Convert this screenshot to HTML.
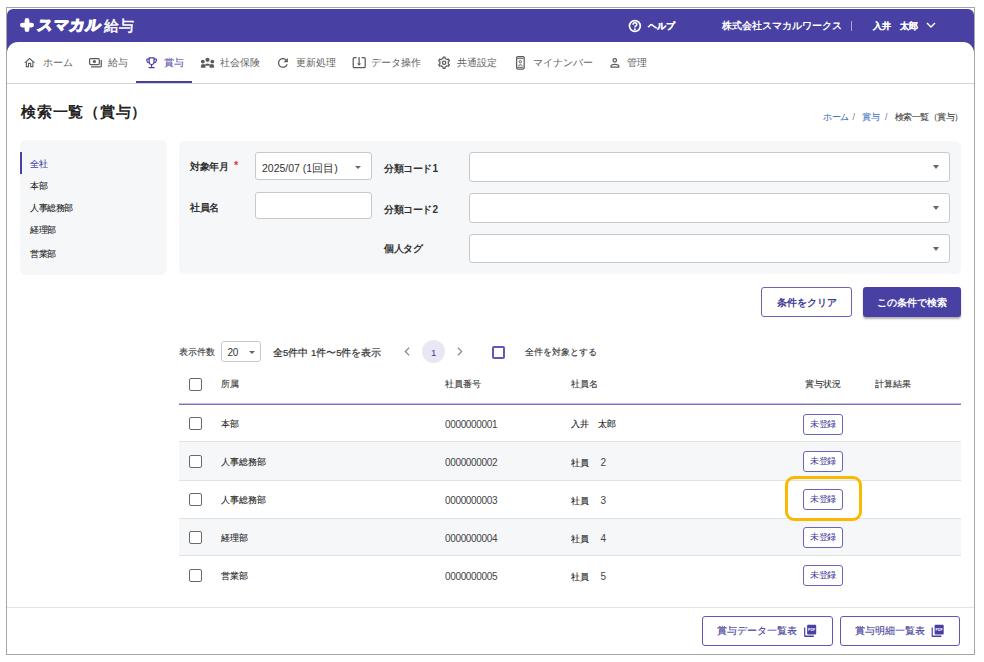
<!DOCTYPE html>
<html lang="ja">
<head>
<meta charset="utf-8">
<style>
*{box-sizing:border-box;margin:0;padding:0}
html,body{width:984px;height:662px;background:#fff;overflow:hidden;font-family:"Liberation Sans",sans-serif;color:#222}
#frame{position:absolute;left:6px;top:7px;width:969px;height:648px;border:1px solid #a6a6a6}
#hdr{position:absolute;left:7px;top:9px;width:967px;height:50px;background:#4841a3;border-radius:6px 6px 0 0}
#main{position:absolute;left:7px;top:42px;width:967px;height:612px;background:#fff;border-radius:11px 11px 0 0}
.t{position:absolute;white-space:nowrap;line-height:1}
.w{color:#fff}
.bc{top:112.5px;font-size:9px;letter-spacing:-.5px;-webkit-text-stroke:.1px}
.bcs{top:113px;font-size:9px;color:#777}
.nav{font-size:10px;color:#636363}
.navline{position:absolute;left:7px;top:83px;width:967px;height:1px;background:#d4d4d4}
.ul{position:absolute;left:136px;top:81px;width:56px;height:2px;background:#4841a3}
.panel{position:absolute;background:#f6f7f9;border-radius:6px}
.inp{position:absolute;background:#fff;border:1px solid #c9c9c9;border-radius:3px}
.caret.s{border-left-width:3.25px;border-right-width:3.25px;border-top-width:3.5px}
.caret{position:absolute;width:0;height:0;border-left:3.75px solid transparent;border-right:3.75px solid transparent;border-top:4px solid #666}
.lbl{font-size:10px;letter-spacing:-.4px;font-weight:bold;color:#333}
.side{font-size:9px;color:#222;letter-spacing:-.5px;-webkit-text-stroke:.1px}
.btn{position:absolute;border-radius:3px;font-size:9.8px;font-weight:bold;display:flex;align-items:center;justify-content:center;white-space:nowrap;padding-top:2px}
.th{font-size:9px;color:#333;-webkit-text-stroke:.1px #333}
.td{font-size:9px;color:#222;-webkit-text-stroke:.1px #222}
.num{font-size:10px;letter-spacing:-.35px;color:#444;-webkit-text-stroke:0}
.cb{position:absolute;width:13px;height:13px;border:1.6px solid #6a6a6a;border-radius:2px;background:#fff}
.row{position:absolute;left:179px;width:782px;height:38px}
.sep{position:absolute;left:179px;width:782px;height:1px;background:#e2e2e2}
.badge{position:absolute;left:803px;width:40px;height:21px;border:1.2px solid #6a63c0;border-radius:3px;font-size:9px;letter-spacing:-.5px;padding-left:0;color:#3f3a98;display:flex;align-items:center;justify-content:center;background:#fff}
</style>
</head>
<body>
<div id="frame"></div>
<div id="hdr"></div>
<div id="main"></div>

<!-- logo -->
<svg style="position:absolute;left:20px;top:18px" width="15" height="15" viewBox="0 0 15 15"><path d="M7 2.5 L7 11.7 M2.4 7.1 L11.6 7.1" stroke="#fff" stroke-width="4.8" stroke-linecap="round"/></svg>
<div class="t w" style="left:38px;top:17px;font-size:15px;font-weight:bold;-webkit-text-stroke:1.3px #fff;transform:skewX(-9deg);letter-spacing:1px">スマカル</div>
<div class="t w" style="left:104px;top:17.5px;font-size:15px;-webkit-text-stroke:.5px #fff">給与</div>

<!-- header right -->
<svg style="position:absolute;left:628px;top:18.5px" width="14" height="14" viewBox="0 0 14 14"><circle cx="6.9" cy="7" r="5.4" fill="none" stroke="#fff" stroke-width="1.7"/><path d="M5.1 5.7 Q5.1 3.8 6.9 3.8 Q8.8 3.8 8.8 5.5 Q8.8 6.5 7.6 7.1 Q6.9 7.4 6.9 8.4" fill="none" stroke="#fff" stroke-width="1.6"/><circle cx="6.9" cy="10.2" r="1" fill="#fff"/></svg>
<div class="t w" style="left:648px;top:21.5px;font-size:9px;font-weight:bold;-webkit-text-stroke:.2px #fff">ヘルプ</div>
<div class="t w" style="left:722px;top:21px;font-size:10px;font-weight:bold">株式会社スマカルワークス</div>
<div class="abs" style="position:absolute;left:851px;top:20.5px;width:1.2px;height:10px;background:#a9a5d8"></div>
<div class="t w" style="left:873px;top:21.5px;font-size:9px;font-weight:bold;-webkit-text-stroke:.12px #fff">入井　太郎</div>
<svg style="position:absolute;left:926px;top:21px" width="10" height="8" viewBox="0 0 10 8"><path d="M1 2 L5 6 L9 2" fill="none" stroke="#fff" stroke-width="1.4"/></svg>

<!-- nav -->
<div class="navline"></div>
<div class="ul"></div>
<div class="t nav" style="left:43px;top:58px">ホーム</div>
<div class="t nav" style="left:108px;top:58px">給与</div>
<div class="t nav" style="left:164px;top:58px;color:#4841a3">賞与</div>
<div class="t nav" style="left:220px;top:58px">社会保険</div>
<div class="t nav" style="left:296px;top:58px">更新処理</div>
<div class="t nav" style="left:371px;top:58px">データ操作</div>
<div class="t nav" style="left:457px;top:58px">共通設定</div>
<div class="t nav" style="left:533px;top:58px">マイナンバー</div>
<div class="t nav" style="left:627px;top:58px">管理</div>

<!-- title -->
<div class="t" style="left:21px;top:104px;font-size:15px;letter-spacing:.75px;font-weight:bold;color:#222">検索一覧（賞与）</div>
<div class="t bc" style="left:823px;color:#4a78c2">ホーム</div>
<div class="t bcs" style="left:852.5px">/</div>
<div class="t bc" style="left:862px;color:#4a78c2">賞与</div>
<div class="t bcs" style="left:885px">/</div>
<div class="t bc" style="left:894.5px;color:#444">検索一覧（賞与）</div>

<!-- sidebar -->
<div class="panel" style="left:20px;top:140px;width:147px;height:135px"></div>
<div class="abs" style="position:absolute;left:20px;top:152px;width:2px;height:22px;background:#4841a3"></div>
<div class="t side" style="left:30px;top:160px;color:#4841a3">全社</div>
<div class="t side" style="left:30px;top:181.5px">本部</div>
<div class="t side" style="left:30px;top:204px">人事総務部</div>
<div class="t side" style="left:30px;top:226px">経理部</div>
<div class="t side" style="left:30px;top:249.5px">営業部</div>

<!-- search panel -->
<div class="panel" style="left:179px;top:141px;width:782px;height:133px"></div>
<div class="t lbl" style="left:190px;top:162px">対象年月</div>
<div class="t" style="left:234px;top:160px;font-size:11px;font-weight:bold;color:#e53935">*</div>
<div class="t lbl" style="left:190px;top:202.5px">社員名</div>
<div class="inp" style="left:255px;top:152px;width:117px;height:28px"></div>
<div class="t" style="left:262px;top:162.5px;font-size:10.5px;color:#333">2025/07 (1回目)</div>
<div class="caret s" style="left:354.5px;top:165.5px"></div>
<div class="inp" style="left:255px;top:192px;width:117px;height:27px"></div>
<div class="t lbl" style="left:384px;top:164px">分類コード<span style="margin-left:.5px">1</span></div>
<div class="t lbl" style="left:384px;top:204.5px">分類コード<span style="margin-left:.5px">2</span></div>
<div class="t lbl" style="left:384px;top:243.5px">個人タグ</div>
<div class="inp" style="left:469px;top:152px;width:481px;height:30px"></div>
<div class="caret" style="left:932.5px;top:165px"></div>
<div class="inp" style="left:469px;top:193px;width:481px;height:30px"></div>
<div class="caret" style="left:932.5px;top:206px"></div>
<div class="inp" style="left:469px;top:234px;width:481px;height:29px"></div>
<div class="caret" style="left:932.5px;top:247px"></div>

<!-- buttons -->
<div class="btn" style="left:761px;top:287px;width:91px;height:30px;border:1.2px solid #6a64b6;color:#3f3a98;background:#fff">条件をクリア</div>
<div class="btn" style="left:863px;top:287px;width:98px;height:30px;background:#4841a3;color:#fff;box-shadow:0 2px 2px rgba(0,0,0,0.3)">この条件で検索</div>

<!-- table controls -->
<div class="t" style="left:179px;top:348px;font-size:9px;color:#333;-webkit-text-stroke:.1px #333">表示件数</div>
<div class="inp" style="left:221px;top:341px;width:40px;height:21px"></div>
<div class="t" style="left:227.5px;top:348px;font-size:10px;letter-spacing:-.4px;color:#333">20</div>
<div class="caret s" style="left:248.5px;top:351px"></div>
<div class="t" style="left:273px;top:348px;font-size:9.5px;color:#333;-webkit-text-stroke:.2px #333">全5件中 1件〜5件を表示</div>
<svg style="position:absolute;left:403px;top:346px" width="8" height="11" viewBox="0 0 8 11"><path d="M6.2 1.6 L2.3 5.5 L6.2 9.4" fill="none" stroke="#8a8a8a" stroke-width="1.3"/></svg>
<div class="abs" style="position:absolute;left:422px;top:340px;width:23px;height:23px;border-radius:50%;background:#e9e7f4"></div>
<div class="t" style="left:431px;top:347.5px;font-size:9.5px;color:#3f3a98">1</div>
<svg style="position:absolute;left:456px;top:346px" width="8" height="11" viewBox="0 0 8 11"><path d="M1.8 1.6 L5.7 5.5 L1.8 9.4" fill="none" stroke="#8a8a8a" stroke-width="1.3"/></svg>
<div class="cb" style="left:492px;top:346px;border:2px solid #5f58b8"></div>
<div class="t" style="left:525px;top:348px;font-size:9px;color:#333;-webkit-text-stroke:.1px #333">全件を対象とする</div>

<!-- table header -->
<div class="cb" style="left:189px;top:378px"></div>
<div class="t th" style="left:221px;top:380px">所属</div>
<div class="t th" style="left:445px;top:380px">社員番号</div>
<div class="t th" style="left:571px;top:380px">社員名</div>
<div class="t th" style="left:805px;top:380px">賞与状況</div>
<div class="t th" style="left:875px;top:380px">計算結果</div>
<div class="abs" style="position:absolute;left:179px;top:403px;width:782px;height:2px;background:linear-gradient(#c2bfe2 50%,#7772bd 50%)"></div>

<!-- rows -->
<div class="row" style="top:442px;height:38px;background:#f6f7f9"></div>
<div class="row" style="top:519px;height:36px;background:#f6f7f9"></div>
<div class="sep" style="top:441px"></div>
<div class="sep" style="top:480px"></div>
<div class="sep" style="top:518px"></div>
<div class="sep" style="top:555px"></div>

<div class="cb" style="left:189px;top:417px"></div>
<div class="t td" style="left:221px;top:420px">本部</div>
<div class="t td" style="left:445px;top:420px"><span class="num">0000000001</span></div>
<div class="t td" style="left:571px;top:420px">入井　太郎</div>
<div class="badge" style="top:414px">未登録</div>

<div class="cb" style="left:189px;top:455px"></div>
<div class="t td" style="left:221px;top:458px">人事総務部</div>
<div class="t td" style="left:445px;top:458px"><span class="num">0000000002</span></div>
<div class="t td" style="left:571px;top:458px">社員　<span class="num" style="margin-left:2.5px">2</span></div>
<div class="badge" style="top:451px">未登録</div>

<div class="cb" style="left:189px;top:493px"></div>
<div class="t td" style="left:221px;top:496px">人事総務部</div>
<div class="t td" style="left:445px;top:496px"><span class="num">0000000003</span></div>
<div class="t td" style="left:571px;top:496px">社員　<span class="num" style="margin-left:2.5px">3</span></div>
<div class="badge" style="top:489px">未登録</div>

<div class="cb" style="left:189px;top:531px"></div>
<div class="t td" style="left:221px;top:534px">経理部</div>
<div class="t td" style="left:445px;top:534px"><span class="num">0000000004</span></div>
<div class="t td" style="left:571px;top:534px">社員　<span class="num" style="margin-left:2.5px">4</span></div>
<div class="badge" style="top:527px">未登録</div>

<div class="cb" style="left:189px;top:569px"></div>
<div class="t td" style="left:221px;top:572px">営業部</div>
<div class="t td" style="left:445px;top:572px"><span class="num">0000000005</span></div>
<div class="t td" style="left:571px;top:572px">社員　<span class="num" style="margin-left:2.5px">5</span></div>
<div class="badge" style="top:565px">未登録</div>

<!-- highlight -->
<div class="abs" style="position:absolute;left:785px;top:476px;width:77px;height:45px;border:3.5px solid #fbb800;border-radius:9px"></div>

<!-- footer -->
<div class="abs" style="position:absolute;left:7px;top:607px;width:967px;height:1px;background:#e4e4e4"></div>
<div class="btn" style="left:702px;top:616px;width:131px;height:30px;border:1.2px solid #5f58b8;background:#fff"></div>
<div class="t" style="left:717px;top:626px;font-size:10px;color:#3f3a98;-webkit-text-stroke:.1px #3f3a98">賞与データ一覧表</div>
<div class="btn" style="left:840px;top:616px;width:120px;height:30px;border:1.2px solid #5f58b8;background:#fff"></div>
<div class="t" style="left:855px;top:626px;font-size:10px;color:#3f3a98;-webkit-text-stroke:.1px #3f3a98">賞与明細一覧表</div>

<!-- icons overlay -->
<svg style="position:absolute;left:0;top:0" width="984" height="662" viewBox="0 0 984 662">
 <g fill="#5c5c5c">
  <path transform="translate(23.0,56.2) scale(0.55)" d="M12 5.69l5 4.5V18h-2v-6H9v6H7v-7.81l5-4.5M12 3L2 12h3v8h6v-6h2v6h6v-8h3L12 3z"/>
  <path transform="translate(275.46,55.46) scale(0.62)" d="M17.65 6.35C16.2 4.9 14.21 4 12 4c-4.42 0-7.99 3.58-7.99 8s3.57 8 7.99 8c3.73 0 6.84-2.55 7.73-6h-2.08c-.82 2.33-3.04 4-5.65 4-3.31 0-6-2.69-6-6s2.69-6 6-6c1.66 0 3.14.69 4.22 1.78L13 11h7V4l-2.35 2.35z"/>
  <circle cx="207.5" cy="59.8" r="2.1"/><circle cx="202.8" cy="61.6" r="1.9"/><circle cx="212.3" cy="61.6" r="1.9"/>
  <path d="M204.4 64.9 Q207.5 61.9 210.6 64.9 Q207.5 66.6 204.4 64.9Z"/>
  <path d="M200.9 67.8 V66 Q200.9 63.9 203.2 63.9 Q205.5 63.9 205.5 66 V67.8Z"/>
  <path d="M209.5 67.8 V66 Q209.5 63.9 211.8 63.9 Q214.1 63.9 214.1 66 V67.8Z"/>
  <path d="M357 63.4 L359.1 65.8 L361.2 63.4Z"/>
  <circle cx="94.4" cy="61.5" r="1.6"/>
 </g>
 <g fill="none" stroke="#5c5c5c" stroke-width="1.25">
  <rect x="89.6" y="58.6" width="9.7" height="5.9" rx="1"/>
  <path d="M91 66.9 H100.2 Q101.3 66.9 101.3 65.8 V60.1"/>
  <path d="M356.6 57.7 H354.2 Q353.2 57.7 353.2 58.7 V66.7 Q353.2 67.7 354.2 67.7 H364.2 Q365.2 67.7 365.2 66.7 V58.7 Q365.2 57.7 364.2 57.7 H361.6"/>
  <path d="M359.1 57 V64"/>
  <path d="M442.00 59.06 L443.04 58.43 L443.21 57.07 L444.99 57.07 L445.16 58.43 L446.20 59.06 L447.27 59.64 L448.53 59.11 L449.42 60.66 L448.33 61.49 L448.30 62.70 L448.33 63.91 L449.42 64.74 L448.53 66.29 L447.27 65.76 L446.20 66.34 L445.16 66.97 L444.99 68.33 L443.21 68.33 L443.04 66.97 L442.00 66.34 L440.93 65.76 L439.67 66.29 L438.78 64.74 L439.87 63.91 L439.90 62.70 L439.87 61.49 L438.78 60.66 L439.67 59.11 L440.93 59.64Z" stroke-linejoin="round"/>
  <circle cx="444.1" cy="62.7" r="1.7"/>
  <rect x="516.6" y="56.6" width="7.6" height="12.4" rx="1.2"/>
  <path d="M517.2 58.3 H523.4 M517.2 67.3 H523.4" stroke-width="1"/>
  <circle cx="520.3" cy="61.7" r="1.2" stroke-width="1"/>
  <path d="M518.3 65.6 Q520.3 63.8 522.3 65.6" stroke-width="1"/>
  <circle cx="614.8" cy="60.3" r="1.75"/>
  <path d="M611 67.1 V66.2 Q611 64.3 614.9 64.3 Q618.8 64.3 618.8 66.2 V67.1 Z"/>
 </g>
 <path transform="translate(144.4,55.55) scale(0.6)" fill="#4841a3" d="M19 5h-2V3H7v2H5c-1.1 0-2 .9-2 2v1c0 2.55 1.92 4.63 4.39 4.94.63 1.5 1.98 2.63 3.61 2.96V19H7v2h10v-2h-4v-3.1c1.63-.33 2.98-1.46 3.61-2.96C19.08 12.63 21 10.55 21 8V7c0-1.1-.9-2-2-2zM5 8V7h2v3.82C5.84 10.4 5 9.3 5 8zm7 6c-1.65 0-3-1.35-3-3V5h6v6c0 1.650-1.35 3-3 3zm7-6c0 1.3-.84 2.4-2 2.82V7h2v1z"/>
 <!-- pdf icons -->
 <g fill="#4841a3">
  <rect x="807.1" y="624.8" width="9.1" height="9.8" rx="1"/>
  <path d="M804.1 627.5 H805.3 V635.6 H813.8 V636.9 H805.1 Q804.1 636.9 804.1 635.9Z"/>
  <rect x="934.6" y="624.8" width="9.1" height="9.8" rx="1"/>
  <path d="M931.6 627.5 H932.8 V635.6 H941.3 V636.9 H932.6 Q931.6 636.9 931.6 635.9Z"/>
 </g>
 <g fill="#fff" font-family="Liberation Sans" font-weight="bold" font-size="4.2">
  <text x="808.1" y="631.3" textLength="7" lengthAdjust="spacingAndGlyphs">PDF</text>
  <text x="935.6" y="631.3" textLength="7" lengthAdjust="spacingAndGlyphs">PDF</text>
 </g>
</svg>
</body>
</html>
